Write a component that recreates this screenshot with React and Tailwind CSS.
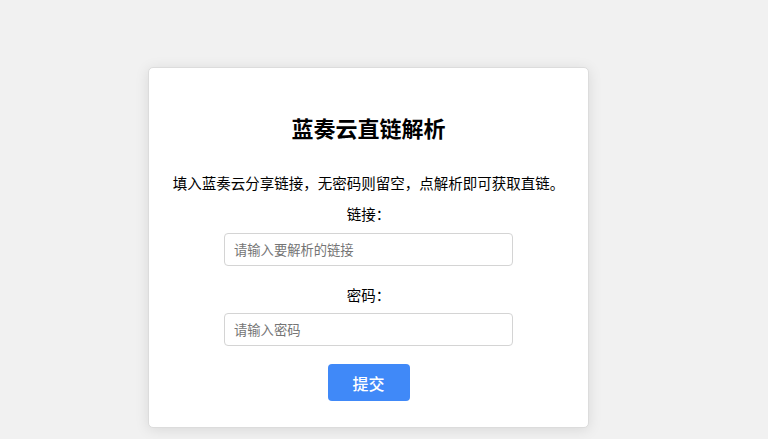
export default function App() {
  return (
    <div
      className="min-h-[439px] w-full bg-[#f1f1f1] pt-[67px]"
      style={{ fontFamily: '"Microsoft YaHei", "Noto Sans CJK SC", "Noto Sans", sans-serif' }}
    >
      {/* Card */}
      <div className="ml-[148px] w-[441px] rounded-[5px] border border-[#dcdcdc] bg-white pt-[44px] pb-[26px] text-center text-black shadow-[0_2px_14px_rgba(0,0,0,0.1)]">
        <h2 className="text-[22px] font-bold leading-[30px]">蓝奏云直链解析</h2>
        <p className="mt-[31px] text-[14.5px] leading-[20px]">
          填入蓝奏云分享链接，无密码则留空，点解析即可获取直链。
        </p>

        <form className="flex flex-col items-center" onSubmit={(e) => e.preventDefault()}>
          <label className="mt-[11px] text-[14.5px] leading-[20px]">链接：</label>
          <input
            type="text"
            placeholder="请输入要解析的链接"
            className="mt-[9px] h-[33px] w-[289px] rounded-[4px] border border-[#d4d4d4] px-[9px] text-[13.3px] outline-none placeholder:text-[#757575]"
          />

          <label className="mt-[19px] text-[14.5px] leading-[20px]">密码：</label>
          <input
            type="text"
            placeholder="请输入密码"
            className="mt-[8px] h-[33px] w-[289px] rounded-[4px] border border-[#d4d4d4] px-[9px] text-[13.3px] outline-none placeholder:text-[#757575]"
          />

          <button
            type="submit"
            className="mt-[18px] h-[37px] w-[82px] rounded-[4px] bg-[#4089f8] text-[16px] font-medium text-white"
          >
            提交
          </button>
        </form>
      </div>
    </div>
  );
}
